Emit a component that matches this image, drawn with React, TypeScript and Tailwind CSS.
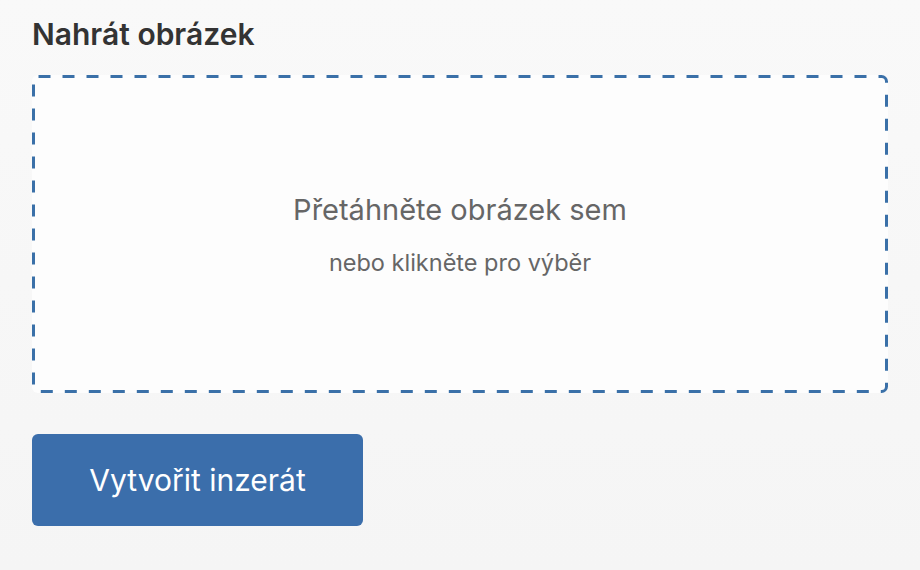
export default function App() {
  return (
    <div
      className="min-h-[570px] w-full bg-gradient-to-b from-[#f9f9f9] to-[#f5f5f5] px-8 pt-[16px] text-[#333]"
      style={{ fontFamily: "Inter, 'Noto Sans', sans-serif" }}
    >
      <h2 className="text-[30px] leading-[36px] font-semibold text-[#333]">
        Nahrát obrázek
      </h2>
      <div className="relative mt-[23px] flex h-[318px] flex-col items-center justify-center rounded-md bg-[#fdfdfd]">
        {/* dashed outline: longer dashes than the browser's border-dashed */}
        <svg className="pointer-events-none absolute inset-0 h-full w-full" aria-hidden="true">
          <rect
            x="1.5"
            y="1.5"
            width="calc(100% - 3px)"
            height="calc(100% - 3px)"
            rx="5"
            fill="none"
            stroke="#3a70a8"
            strokeWidth="3"
            strokeDasharray="12 12"
          />
        </svg>
        <p className="text-[29px] leading-[36px] text-[#666]">Přetáhněte obrázek sem</p>
        <p className="mt-[21px] text-[23.5px] leading-[28px] text-[#666]">nebo klikněte pro výběr</p>
      </div>
      <button className="mt-[41px] h-[92px] w-[331px] rounded-md bg-[#3b6eab] text-[30px] text-white">
        Vytvořit inzerát
      </button>
    </div>
  );
}
